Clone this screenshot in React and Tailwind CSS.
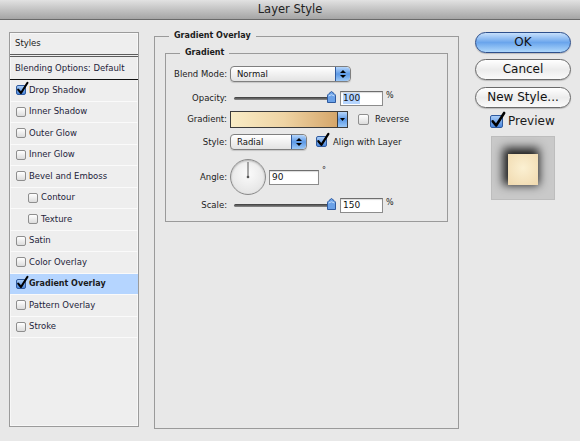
import React from "react";

const STYLES = [
  { name: "Drop Shadow", checked: true },
  { name: "Inner Shadow" },
  { name: "Outer Glow" },
  { name: "Inner Glow" },
  { name: "Bevel and Emboss" },
  { name: "Contour", indent: true },
  { name: "Texture", indent: true },
  { name: "Satin" },
  { name: "Color Overlay" },
  { name: "Gradient Overlay", checked: true, selected: true },
  { name: "Pattern Overlay" },
  { name: "Stroke" },
];

function Check({ checked, size = 10 }) {
  if (!checked) {
    return <span className="inline-block shrink-0 rounded-[2px] border border-[#8e8e8e] bg-gradient-to-b from-[#ffffff] to-[#dcdcdc]" style={{ width: size, height: size }} />;
  }
  return <span className="relative inline-block shrink-0" style={{ width: size, height: size }}>
    <span className="absolute inset-0 rounded-[2px] border border-[#2f5a9e] bg-gradient-to-b from-[#a9cdf7] to-[#4a86dc]" />
    <svg className="absolute left-0 top-[-3px] overflow-visible" width={size + 3} height={size + 3} viewBox="0 0 13 13">
      <path d="M2.2 7.6 L5 11 L11.5 0.8" fill="none" stroke="#000" strokeWidth="2.1" strokeLinecap="round" strokeLinejoin="round" />
    </svg>
  </span>;
}

function Arrows() {
  return <span className="flex h-full w-[15px] flex-col items-center justify-center gap-[2px] rounded-r-[4px] border-l border-[#2f5a9e] bg-gradient-to-b from-[#b6d6fb] via-[#5c99e6] to-[#9cc8f6]">
    <svg width="6" height="3" viewBox="0 0 6 3"><path d="M0 3 L3 0 L6 3 Z" fill="#000" /></svg>
    <svg width="6" height="3" viewBox="0 0 6 3"><path d="M0 0 L3 3 L6 0 Z" fill="#000" /></svg>
  </span>;
}

function Select({ value, width }) {
  return <div className="flex h-[16px] items-center overflow-hidden rounded-[4px] border border-[#7f7f7f] bg-gradient-to-b from-[#ffffff] to-[#e3e3e3] shadow-[0_1px_1px_rgba(0,0,0,0.15)]" style={{ width }}>
    <span className="flex-1 pl-[6px] text-[8.5px] text-[#111]">{value}</span>
    <Arrows />
  </div>;
}

function Slider() {
  return <div className="relative flex h-[16px] w-[110px] items-center">
    <span className="ml-[4px] h-[3px] w-[98px] rounded-full bg-gradient-to-b from-[#3a3a3a] to-[#8e8e8e]" />
    <svg className="absolute right-[4px] top-[1px]" width="9" height="12" viewBox="0 0 9 12">
      <path d="M0.5 11.5 L0.5 5 Q0.5 3.5 2 2.5 L4.5 0.5 L7 2.5 Q8.5 3.5 8.5 5 L8.5 11.5 Z" fill="#6aa1e8" stroke="#2f5a9e" strokeWidth="1" />
      <path d="M1.5 5 Q4.5 2.5 7.5 5" fill="none" stroke="#c3ddfb" strokeWidth="1" />
    </svg>
  </div>;
}

function Field({ value, width, highlight }) {
  return <div className="flex h-[15px] items-center border border-[#8c8c8c] border-t-[#6e6e6e] bg-white pl-[2px] shadow-[inset_0_1px_1px_rgba(0,0,0,0.15)]" style={{ width }}>
    <span className={"text-[9px] leading-[11px] text-[#111] " + (highlight ? "bg-[#b5d5ff]" : "")}>{value}</span>
  </div>;
}

function Label({ children }) {
  return <span className="w-[64px] shrink-0 pr-[3px] text-right text-[8.5px] text-[#1b1b1b]">{children}</span>;
}

export default function App() {
  return <div className="flex h-[441px] w-[580px] flex-col overflow-hidden bg-[#e8e8e8] text-[#1b1b1b]" style={{ fontFamily: '"DejaVu Sans", sans-serif' }}>
    <div className="flex h-[20px] shrink-0 items-center justify-center border-b border-[#6a6a6a] bg-gradient-to-b from-[#e2e2e2] to-[#a5a5a5] text-[11.5px] text-[#222]">Layer Style</div>

    <div className="flex pl-[9px] pt-[9px]">
      {/* styles list */}
      <div className="mt-[3px] flex h-[395px] w-[130px] shrink-0 flex-col border border-[#9b9b9b] bg-[#eeeeee] shadow-[inset_0_0_0_1px_#f7f7f7]">
        <div className="flex h-[24px] shrink-0 items-center border-b-[3px] border-double border-[#5c5c5c] pl-[5px] text-[8.5px]">Styles</div>
        <div className="flex h-[23px] shrink-0 items-center border-b border-[#111] pl-[5px] text-[8.5px] text-[#1d1d3a]">Blending Options: Default</div>
        {STYLES.map((s) => <div key={s.name} className={"flex h-[21.5px] shrink-0 items-center gap-[3px] border-b border-[#fafafa] text-[8.5px] " + (s.indent ? "pl-[18px] " : "pl-[6px] ") + (s.selected ? "bg-[#b5d5ff] font-bold text-[8px]" : "text-[#1d1d3a]")}>
          <Check checked={s.checked} />
          <span>{s.name}</span>
        </div>)}
      </div>

      {/* gradient overlay */}
      <fieldset className="ml-[15px] mt-[2px] h-[398px] w-[305px] shrink-0 border border-[#9a9a9a] px-[10px]">
        <legend className="ml-[4px] px-[5px] text-[8px] font-bold leading-[10px]">Gradient Overlay</legend>
        <fieldset className="mt-[7px] border border-[#9a9a9a] pb-[8px] pt-[8px]">
          <legend className="ml-[14px] px-[5px] text-[8px] font-bold leading-[10px]">Gradient</legend>

          <div className="flex h-[16px] items-center">
            <Label>Blend Mode:</Label>
            <Select value="Normal" width={121} />
          </div>

          <div className="mt-[8px] flex h-[16px] items-center">
            <Label>Opacity:</Label>
            <Slider />
            <Field value="100" width={43} highlight />
            <span className="ml-[3px] self-start text-[8px]">%</span>
          </div>

          <div className="mt-[5px] flex h-[17px] items-center">
            <Label>Gradient:</Label>
            <div className="flex h-[17px] w-[118px] border border-[#3c3c3c]">
              <span className="flex-1 bg-gradient-to-r from-[#f9ecc6] via-[#efd4a4] to-[#d5a66a]" />
              <span className="flex w-[10px] items-center justify-center border-l border-[#3c3c3c] bg-gradient-to-b from-[#b7d6fa] via-[#5c99e6] to-[#9cc8f6]">
                <svg width="5" height="3" viewBox="0 0 5 3"><path d="M0 0 L2.5 3 L5 0 Z" fill="#000" /></svg>
              </span>
            </div>
            <span className="ml-[10px]"><Check size={11} /></span>
            <span className="ml-[6px] text-[8.5px]">Reverse</span>
          </div>

          <div className="mt-[6px] flex h-[16px] items-center">
            <Label>Style:</Label>
            <Select value="Radial" width={77} />
            <span className="ml-[9px]"><Check checked size={11} /></span>
            <span className="ml-[6px] text-[8.5px]">Align with Layer</span>
          </div>

          <div className="mt-[9px] flex h-[36px] items-center">
            <Label>Angle:</Label>
            <div className="relative h-[36px] w-[36px] rounded-full border border-[#8a8a8a] bg-[radial-gradient(circle_at_50%_40%,#fbfbfb,#dedede)] shadow-[inset_0_1px_2px_rgba(0,0,0,0.25)]">
              <svg className="absolute inset-0" width="34" height="34" viewBox="0 0 34 34">
                <line x1="17" y1="17" x2="17" y2="2" stroke="#555" strokeWidth="1" />
                <circle cx="17" cy="17" r="1.3" fill="#555" />
              </svg>
            </div>
            <span className="ml-[3px]"><Field value="90" width={50} /></span>
            <span className="ml-[3px] self-start pt-[6px] text-[8px]">°</span>
          </div>

          <div className="mt-[2px] flex h-[16px] items-center">
            <Label>Scale:</Label>
            <Slider />
            <Field value="150" width={43} />
            <span className="ml-[3px] self-start text-[8px]">%</span>
          </div>
        </fieldset>
      </fieldset>

      {/* buttons */}
      <div className="ml-[16px] mt-[3px] flex w-[96px] shrink-0 flex-col items-center">
        <button className="h-[21px] w-[96px] rounded-full border border-[#2d4f8c] bg-gradient-to-b from-[#c7e0fb] via-[#6aa5ec] to-[#aed7fb] text-[12px] leading-[19px] text-[#111] shadow-[0_1px_1px_rgba(0,0,0,0.2)]">OK</button>
        <button className="mt-[6px] h-[21px] w-[96px] rounded-full border border-[#6a6a6a] bg-gradient-to-b from-[#ffffff] via-[#ececec] to-[#fafafa] text-[12px] leading-[19px] text-[#111] shadow-[0_1px_1px_rgba(0,0,0,0.2)]">Cancel</button>
        <button className="mt-[7px] h-[21px] w-[96px] rounded-full border border-[#6a6a6a] bg-gradient-to-b from-[#ffffff] via-[#ececec] to-[#fafafa] text-[12px] leading-[19px] text-[#111] shadow-[0_1px_1px_rgba(0,0,0,0.2)]">New Style...</button>
        <div className="mt-[4px] flex w-full items-center pl-[15px]">
          <Check checked size={13} />
          <span className="ml-[5px] text-[12px]">Preview</span>
        </div>
        <div className="ml-[-1px] mt-[6px] flex h-[64px] w-[64px] items-center justify-center border border-[#bdbdbd] bg-[#c9c9c9]">
          <span className="mt-[2px] h-[31px] w-[30px] bg-[radial-gradient(circle_at_50%_45%,#fbf0d2,#f0d9ae)] shadow-[-2px_-3px_9px_3px_rgba(0,0,0,0.85)]" />
        </div>
      </div>
    </div>
  </div>;
}
